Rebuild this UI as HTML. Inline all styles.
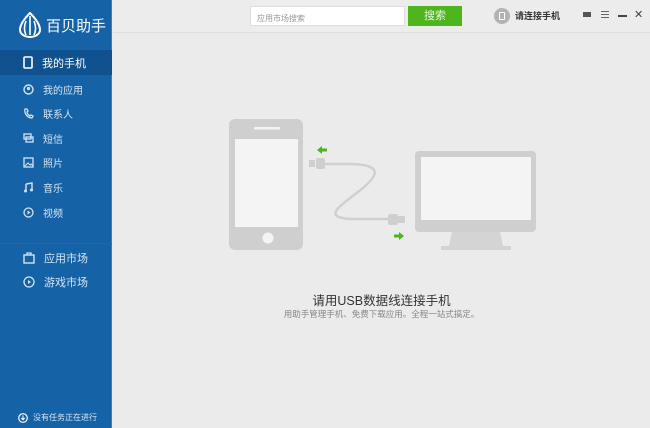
<!DOCTYPE html>
<html><head><meta charset="utf-8"><style>
*{margin:0;padding:0;box-sizing:border-box}
body{width:650px;height:428px;overflow:hidden;background:#ebebeb;font-family:"Liberation Sans","Noto Sans CJK SC",sans-serif;position:relative}
#side{position:absolute;left:0;top:0;width:112px;height:428px;background:#1562a6;border-right:1px solid #3d80bf}
.logo{position:absolute;left:18px;top:12px;color:#fff;font-size:15px;display:flex;align-items:center;white-space:nowrap}
.item{position:absolute;left:0;width:112px;height:25px;color:#d5e4f2;font-size:10px;display:flex;align-items:center;padding-left:23px;white-space:nowrap}
.item svg{margin-right:9px}
.act{background:#10528f;color:#fff;font-size:11px}
.big{font-size:11px}
#top{position:absolute;left:113px;top:0;right:0;height:33px;border-bottom:1px solid #dedede;background:#ececec}
</style></head><body>
<div id="side">
<div class="logo"><svg width="24" height="26" viewBox="0 0 24 26"><path d="M12 1C5 8 2 14 2 18a10 7 0 0 0 20 0c0-4-3-10-10-17z" fill="none" stroke="#fff" stroke-width="2"/><path d="M12 4v19M8 9c-2 5-2 10 0 14M16 9c2 5 2 10 0 14" stroke="#fff" stroke-width="1.6" fill="none"/></svg><span style="margin-left:4px">百贝助手</span></div>
<div class="item act" style="top:50px"><svg width="10" height="13"><rect x="1" y="1" width="8" height="11" rx="1" fill="none" stroke="#fff" stroke-width="1.6"/></svg>我的手机</div>
<div class="item" style="top:77px"><svg width="11" height="11"><circle cx="5.5" cy="5.5" r="4.5" fill="none" stroke="#d5e4f2" stroke-width="1.4"/><circle cx="5.5" cy="4.5" r="1.6" fill="#d5e4f2"/></svg>我的应用</div>
<div class="item" style="top:101px"><svg width="11" height="11"><path d="M2 1c-1 4 2 9 7 9l1-2-2-1-1 1C5 7 4 5 4 4l1-1-1-2z" fill="none" stroke="#d5e4f2" stroke-width="1.3"/></svg>联系人</div>
<div class="item" style="top:126px"><svg width="11" height="11"><rect x="1" y="1" width="7" height="5" fill="none" stroke="#d5e4f2" stroke-width="1.3"/><rect x="3" y="4" width="7" height="5" fill="none" stroke="#d5e4f2" stroke-width="1.3"/></svg>短信</div>
<div class="item" style="top:150px"><svg width="11" height="11"><rect x="1" y="1" width="9" height="9" fill="none" stroke="#d5e4f2" stroke-width="1.3"/><path d="M2 9l3-3 2 2 1-1 2 2" stroke="#d5e4f2" fill="none"/></svg>照片</div>
<div class="item" style="top:175px"><svg width="11" height="11"><path d="M3 2l6-1v7M3 2v7" stroke="#d5e4f2" stroke-width="1.4" fill="none"/><circle cx="2.5" cy="9" r="1.5" fill="#d5e4f2"/><circle cx="8.5" cy="8" r="1.5" fill="#d5e4f2"/></svg>音乐</div>
<div class="item" style="top:200px"><svg width="11" height="11"><circle cx="5.5" cy="5.5" r="4.5" fill="none" stroke="#d5e4f2" stroke-width="1.3"/><path d="M4.5 3.5v4l3-2z" fill="#d5e4f2"/></svg>视频</div>
<div style="position:absolute;left:0;top:243px;width:112px;height:1px;background:#1b6aaf"></div>
<div class="item big" style="top:245px"><svg width="12" height="13"><rect x="1" y="4" width="10" height="8" fill="none" stroke="#d5e4f2" stroke-width="1.4"/><path d="M4 4V2h4v2" stroke="#d5e4f2" fill="none" stroke-width="1.3"/></svg>应用市场</div>
<div class="item big" style="top:269px"><svg width="12" height="12"><circle cx="6" cy="6" r="5" fill="none" stroke="#d5e4f2" stroke-width="1.3"/><path d="M5 4v4l3-2z" fill="#d5e4f2"/></svg>游戏市场</div>
<div style="position:absolute;left:18px;top:412px;color:#d5e4f2;font-size:8px;display:flex;align-items:center;white-space:nowrap"><svg width="10" height="10" style="margin-right:5px"><circle cx="5" cy="5" r="4.3" fill="none" stroke="#fff" stroke-width="1.2"/><path d="M5 2.5v4M3.3 5l1.7 1.8L6.7 5" stroke="#fff" fill="none"/></svg>没有任务正在进行</div>
</div>
<div id="top">
<div style="position:absolute;left:137px;top:6px;width:155px;height:20px;background:#fff;border:1px solid #ddd;font-size:8px;color:#999;padding:6px 0 0 6px">应用市场搜索</div>
<div style="position:absolute;left:295px;top:6px;width:54px;height:20px;background:#4eb51c;color:#e8f6df;font-size:11px;text-align:center;line-height:20px">搜索</div>
<div style="position:absolute;left:381px;top:8px;width:16px;height:16px;border-radius:50%;background:#b3b3b3"><div style="position:absolute;left:5px;top:4px;width:6px;height:8px;border:1px solid #fff;border-radius:1px"></div></div>
<div style="position:absolute;left:402px;top:9px;font-size:9px;color:#333;font-weight:bold">请连接手机</div>
<div style="position:absolute;left:470px;top:12px;width:8px;height:5px;background:#555"></div>
<div style="position:absolute;left:488px;top:11px;width:8px;height:1px;background:#666;box-shadow:0 3px 0 #666,0 6px 0 #666"></div>
<div style="position:absolute;left:505px;top:15px;width:9px;height:1.5px;background:#444"></div>
<div style="position:absolute;left:521px;top:8px;font-size:11px;color:#444">✕</div>
</div>
<svg style="position:absolute;left:0;top:0" width="650" height="428">
<rect x="229" y="119" width="74" height="131" rx="6" fill="#cfcfcf"/>
<rect x="235" y="139" width="63" height="88" fill="#f4f4f4"/>
<rect x="254" y="127" width="26" height="2.5" rx="1" fill="#f4f4f4"/>
<circle cx="268" cy="238" r="5.5" fill="#f4f4f4"/>
<path d="M322 164h26c40 0 28 14 10 28s-36 25-8 27h40" fill="none" stroke="#d0d0d0" stroke-width="2.5"/>
<rect x="309" y="160" width="6" height="7" fill="#cfcfcf"/><rect x="316" y="158" width="9" height="11" rx="2" fill="#cfcfcf"/>
<rect x="388" y="214" width="10" height="11" rx="2" fill="#cfcfcf"/><rect x="398" y="216" width="7" height="7" fill="#cfcfcf"/>
<path d="M317 150l5-4v2.5h5v3h-5v2.5z" fill="#4bb51b"/>
<path d="M404 236l-5-4v2.5h-5v3h5v2.5z" fill="#4bb51b"/>
<rect x="415" y="151" width="121" height="81" rx="4" fill="#cfcfcf"/>
<rect x="421" y="157" width="110" height="63" fill="#f4f4f4"/>
<path d="M452 232h48l3 14h8v4h-70v-4h8z" fill="#d4d4d4"/>
</svg>
<div style="position:absolute;left:113px;width:537px;top:290px;text-align:center;font-size:12.5px;color:#333">请用USB数据线连接手机</div>
<div style="position:absolute;left:113px;width:537px;top:308px;text-align:center;font-size:8.5px;color:#888">用助手管理手机、免费下载应用。全程一站式搞定。</div>
</body></html>
